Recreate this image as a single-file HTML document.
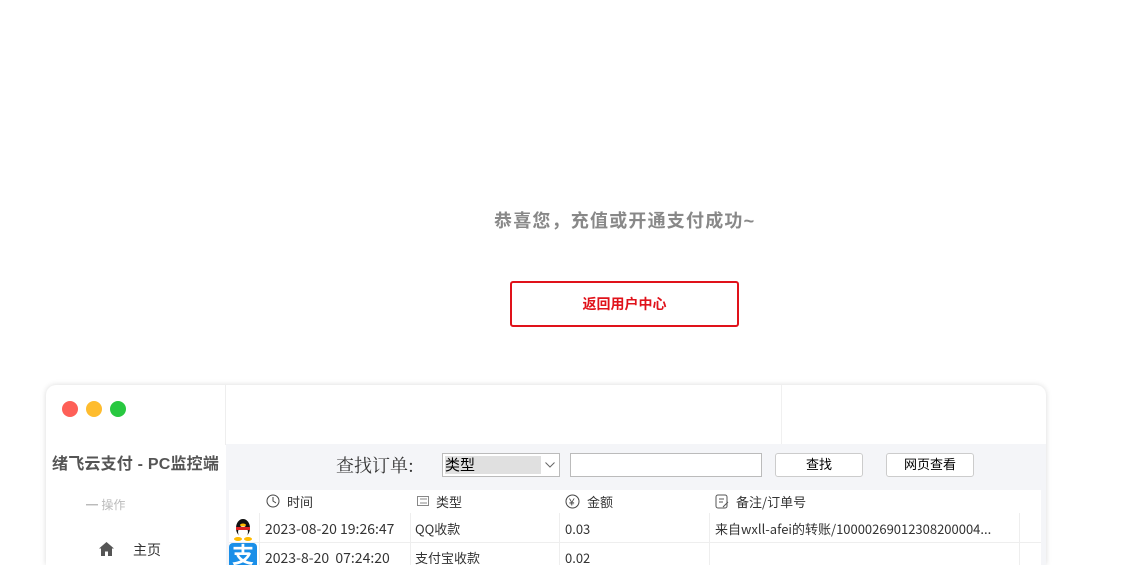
<!DOCTYPE html>
<html style="overflow:hidden"><head><meta charset="utf-8"><style>
*{margin:0;padding:0;box-sizing:border-box}
html,body{width:1129px;height:565px;overflow:hidden}
body{background:#fff;position:relative;font-family:"Liberation Sans","Noto Sans CJK SC",sans-serif}
.a{position:absolute}
.t{font-size:13px;color:#333;white-space:nowrap;font-family:"Noto Sans CJK SC",sans-serif;line-height:16px}
</style></head><body>
<div class="a" style="left:494px;top:207px;font-size:18px;font-weight:bold;color:#888;white-space:nowrap;letter-spacing:1.2px">恭喜您，充值或开通支付成功~</div>
<div class="a" style="left:510px;top:281px;width:229px;height:46px;border:2px solid #e0121a;border-radius:3px;color:#e0121a;font-weight:bold;font-size:14px;text-align:center;line-height:42px">返回用户中心</div>

<div class="a" style="left:46px;top:385px;width:1000px;height:180px;background:#fff;border-radius:10px 10px 0 0;box-shadow:0 0 6px rgba(0,0,0,.15)"></div>
<div class="a" style="left:62px;top:401px;width:16px;height:16px;border-radius:50%;background:#fe5f57"></div>
<div class="a" style="left:86px;top:401px;width:16px;height:16px;border-radius:50%;background:#febc2e"></div>
<div class="a" style="left:110px;top:401px;width:16px;height:16px;border-radius:50%;background:#28c840"></div>
<div class="a" style="left:225px;top:385px;width:1px;height:60px;background:#eee"></div>
<div class="a" style="left:781px;top:385px;width:1px;height:60px;background:#f0f0f0"></div>
<div class="a" style="left:52px;top:450px;font-size:16px;font-weight:bold;color:#555;white-space:nowrap;letter-spacing:0.2px">绪飞云支付 - PC监控端</div>
<div class="a" style="left:86px;top:496px;font-size:12px;color:#bbb">━ 操作</div>
<svg class="a" style="left:99px;top:542px" width="15" height="14" viewBox="0 0 15 14"><path d="M7.5 0L0 6.5h2V14h4V9.5h3V14h4V6.5h2z" fill="#555"/></svg>
<div class="a" style="left:133px;top:540px;font-size:14px;color:#333">主页</div>

<div class="a" style="left:226px;top:444px;width:820px;height:121px;background:#f4f5f8"></div>
<div class="a" style="left:336px;top:452px;font-size:18px;color:#333;font-family:'Noto Serif CJK SC',serif">查找订单:</div>
<div class="a" style="left:442px;top:453px;width:118px;height:24px;border:1px solid #bbb;background:#fff"><div style="position:absolute;left:2px;top:2px;width:96px;height:18px;background:#e0e0e0;font-size:15px;line-height:18px;color:#000;font-family:'Noto Sans CJK SC',sans-serif">类型</div><svg style="position:absolute;right:4px;top:8px" width="10" height="6"><path d="M0.5 0.5l4.5 4.5 4.5-4.5" fill="none" stroke="#666"/></svg></div>
<div class="a" style="left:570px;top:453px;width:192px;height:24px;border:1px solid #bbb;background:#fff"></div>
<div class="a" style="left:775px;top:453px;width:88px;height:24px;border:1px solid #ccc;border-radius:3px;background:#fff;font-size:13px;text-align:center;line-height:22px">查找</div>
<div class="a" style="left:886px;top:453px;width:88px;height:24px;border:1px solid #ccc;border-radius:3px;background:#fff;font-size:13px;text-align:center;line-height:22px">网页查看</div>

<div class="a" style="left:229px;top:490px;width:812px;height:75px;background:#fff"></div>
<div class="a" style="left:229px;top:542px;width:812px;height:1px;background:#eee"></div>
<div class="a" style="left:259px;top:513px;width:1px;height:52px;background:#eee"></div>
<div class="a" style="left:410px;top:513px;width:1px;height:52px;background:#eee"></div>
<div class="a" style="left:559px;top:513px;width:1px;height:52px;background:#eee"></div>
<div class="a" style="left:709px;top:513px;width:1px;height:52px;background:#eee"></div>
<div class="a" style="left:1019px;top:513px;width:1px;height:52px;background:#eee"></div>

<svg class="a" style="left:266px;top:494px" width="14" height="14"><circle cx="7" cy="7" r="6" fill="none" stroke="#444"/><path d="M7 3v4l3 2" stroke="#444" fill="none"/></svg>
<div class="a t" style="left:287px;top:494px">时间</div>
<svg class="a" style="left:417px;top:496px" width="12" height="10"><rect x="0.5" y="0.5" width="11" height="9" fill="none" stroke="#888"/><path d="M3 3h7M3 7h7" stroke="#888"/></svg>
<div class="a t" style="left:436px;top:494px">类型</div>
<svg class="a" style="left:565px;top:494px" width="15" height="15"><circle cx="7.5" cy="7.5" r="6.5" fill="none" stroke="#444"/><text x="4" y="11.5" font-size="10" fill="#444">¥</text></svg>
<div class="a t" style="left:587px;top:494px">金额</div>
<svg class="a" style="left:715px;top:494px" width="15" height="15"><rect x="1" y="1" width="11" height="13" rx="2" fill="none" stroke="#555"/><path d="M4 5h5M4 8h4M8 13l5-5" stroke="#555"/></svg>
<div class="a t" style="left:736px;top:494px">备注/订单号</div>

<svg class="a" style="left:231px;top:515px" width="24" height="26"><ellipse cx="12" cy="13" rx="7" ry="9" fill="#111"/><ellipse cx="12" cy="17" rx="5" ry="6" fill="#fff"/><rect x="5" y="12" width="14" height="3" fill="#d22"/><ellipse cx="12" cy="10" rx="3" ry="1.5" fill="#fb0"/><ellipse cx="7" cy="24" rx="4" ry="2" fill="#fb0"/><ellipse cx="17" cy="24" rx="4" ry="2" fill="#fb0"/></svg>
<div class="a t" style="left:265px;top:521px;font-size:14px">2023-08-20 19:26:47</div>
<div class="a t" style="left:415px;top:521px">QQ收款</div>
<div class="a t" style="left:565px;top:521px">0.03</div>
<div class="a t" style="left:715px;top:521px">来自wxll-afei的转账/10000269012308200004...</div>

<div class="a" style="left:229px;top:543px;width:28px;height:26px;background:#1a8fe8;border-radius:4px;color:#fff;font-size:22px;line-height:26px;text-align:center;font-weight:bold">支</div>
<div class="a t" style="left:265px;top:550px;font-size:14px">2023-8-20&nbsp;&nbsp;07:24:20</div>
<div class="a t" style="left:415px;top:550px">支付宝收款</div>
<div class="a t" style="left:565px;top:550px">0.02</div>
</body></html>
